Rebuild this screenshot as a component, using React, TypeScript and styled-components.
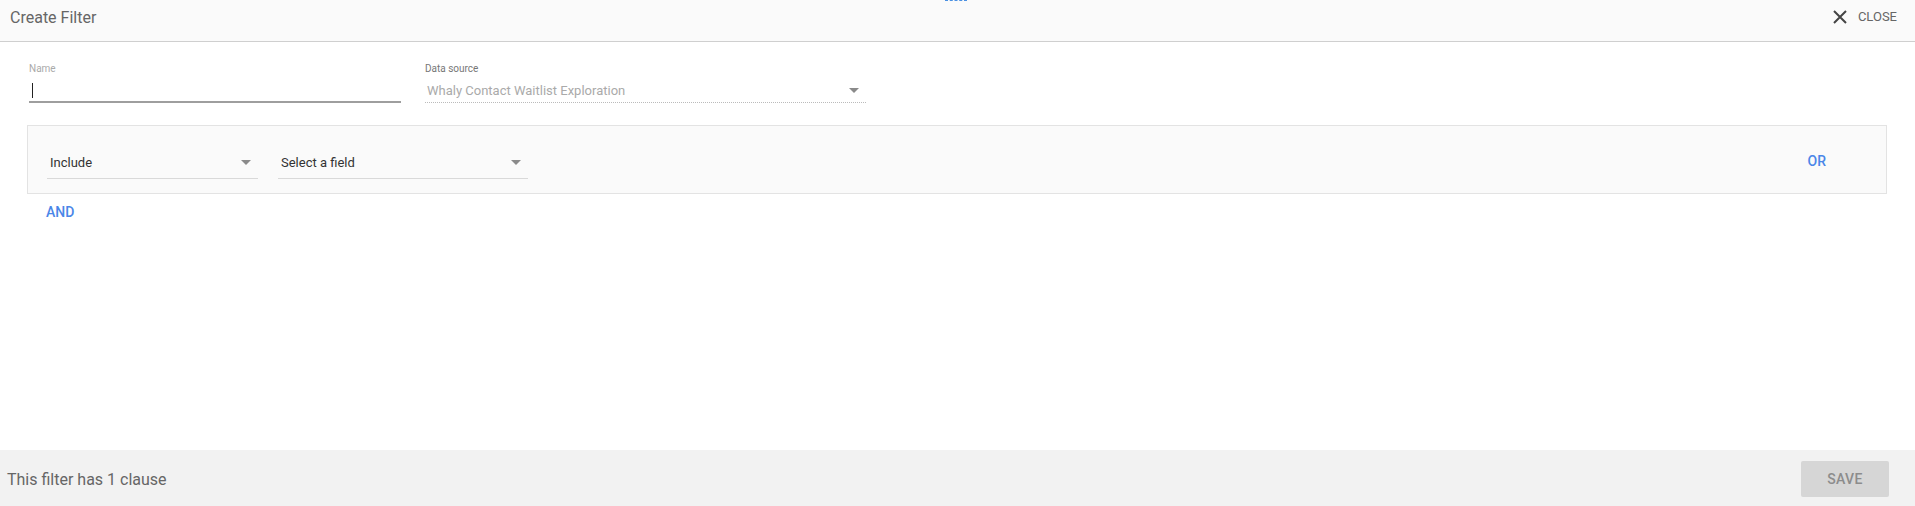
import React from "react";
import styled, { createGlobalStyle } from "styled-components";

const Global = createGlobalStyle`
  html, body { margin: 0; padding: 0; background: #fff; }
  body { font-family: Roboto, "Liberation Sans", sans-serif; }
  * { box-sizing: border-box; }
`;

const Page = styled.div`
  width: 1915px;
  height: 506px;
  display: flex;
  flex-direction: column;
  position: relative;
  overflow: hidden;
`;

const Header = styled.div`
  height: 42px;
  flex: none;
  background: #fafafa;
  border-bottom: 1px solid #cfcfcf;
  display: flex;
  align-items: flex-start;
  justify-content: space-between;
  padding: 8px 18px 0 10px;
  position: relative;
`;

const Title = styled.div`
  font-size: 16px;
  line-height: 19px;
  color: #666;
`;

const TopDots = styled.div`
  position: absolute;
  top: 0;
  left: 945px;
  width: 22px;
  height: 1px;
  border-top: 1px dashed #4a90e2;
`;

const CloseButton = styled.button`
  display: flex;
  align-items: center;
  gap: 11px;
  background: none;
  border: none;
  padding: 0;
  margin-top: 1px;
  font-family: inherit;
  font-size: 13px;
  line-height: 16px;
  color: #666;
  cursor: pointer;
`;

const Content = styled.div`
  flex: 1;
  padding: 21px 28px 0 27px;
  display: flex;
  flex-direction: column;
`;

const FieldsRow = styled.div`
  display: flex;
  gap: 24px;
  padding-left: 2px;
`;

const Field = styled.div<{ $w: number }>`
  width: ${(p) => p.$w}px;
  display: flex;
  flex-direction: column;
`;

const Label = styled.div<{ $muted?: boolean }>`
  font-size: 10px;
  line-height: 12px;
  color: ${(p) => (p.$muted ? "#aaa" : "#777")};
  height: 12px;
`;

const InputBox = styled.div<{ $variant: "focus" | "dotted" }>`
  height: 24px;
  margin-top: 4px;
  display: flex;
  align-items: center;
  justify-content: space-between;
  font-size: 13px;
  color: #aaa;
  padding: 0 7px 0 2px;
  border-bottom: ${(p) =>
    p.$variant === "focus" ? "2px solid #9e9e9e" : "1px dotted #bbb"};
`;

const Caret = styled.span`
  display: inline-block;
  width: 1px;
  height: 15px;
  background: #222;
  margin-left: 1px;
`;

const Arrow = styled.span`
  width: 0;
  height: 0;
  border-left: 5px solid transparent;
  border-right: 5px solid transparent;
  border-top: 5px solid #8a8a8a;
`;

const ClauseBox = styled.div`
  margin-top: 22px;
  height: 69px;
  border: 1px solid #e3e3e3;
  background: #fafafa;
  display: flex;
  align-items: center;
  justify-content: space-between;
  padding: 0 60px 0 19px;
`;

const Selects = styled.div`
  display: flex;
  gap: 20px;
  margin-top: 11px;
`;

const Select = styled.div<{ $w: number }>`
  width: ${(p) => p.$w}px;
  height: 27px;
  display: flex;
  align-items: center;
  justify-content: space-between;
  padding: 0 7px 5px 3px;
  font-size: 13px;
  color: #333;
  border-bottom: 1px solid #d9d9d9;
`;

const LinkButton = styled.button<{ $offset?: number }>`
  background: none;
  border: none;
  padding: 0;
  margin-top: ${(p) => p.$offset ?? 0}px;
  font-family: inherit;
  font-size: 14px;
  font-weight: 500;
  color: #4a86e8;
  cursor: pointer;
`;

const AndRow = styled.div`
  padding: 8px 0 0 19px;
`;

const Footer = styled.div`
  height: 56px;
  flex: none;
  background: #f2f2f2;
  display: flex;
  align-items: center;
  justify-content: space-between;
  padding: 0 26px 0 7px;
`;

const FooterText = styled.div`
  font-size: 16px;
  color: #666;
  margin-top: 2px;
`;

const SaveButton = styled.button`
  width: 88px;
  height: 36px;
  border: none;
  border-radius: 2px;
  background: #d6d6d6;
  color: #8c8c8c;
  font-family: inherit;
  font-size: 14px;
  font-weight: 500;
  letter-spacing: 0.3px;
  margin-top: 1px;
`;

export default function App() {
  return (
    <>
      <Global />
      <Page>
        <Header>
          <Title>Create Filter</Title>
          <TopDots />
          <CloseButton>
            <svg width="14" height="14" viewBox="0 0 14 14">
              <path d="M1 1 L13 13 M13 1 L1 13" stroke="#444" strokeWidth="2" fill="none" />
            </svg>
            CLOSE
          </CloseButton>
        </Header>
        <Content>
          <FieldsRow>
            <Field $w={372}>
              <Label $muted>Name</Label>
              <InputBox $variant="focus">
                <Caret />
              </InputBox>
            </Field>
            <Field $w={441}>
              <Label>Data source</Label>
              <InputBox $variant="dotted">
                <span>Whaly Contact Waitlist Exploration</span>
                <Arrow />
              </InputBox>
            </Field>
          </FieldsRow>
          <ClauseBox>
            <Selects>
              <Select $w={211}>
                <span>Include</span>
                <Arrow />
              </Select>
              <Select $w={250}>
                <span>Select a field</span>
                <Arrow />
              </Select>
            </Selects>
            <LinkButton $offset={2}>OR</LinkButton>
          </ClauseBox>
          <AndRow>
            <LinkButton>AND</LinkButton>
          </AndRow>
        </Content>
        <Footer>
          <FooterText>This filter has 1 clause</FooterText>
          <SaveButton>SAVE</SaveButton>
        </Footer>
      </Page>
    </>
  );
}
